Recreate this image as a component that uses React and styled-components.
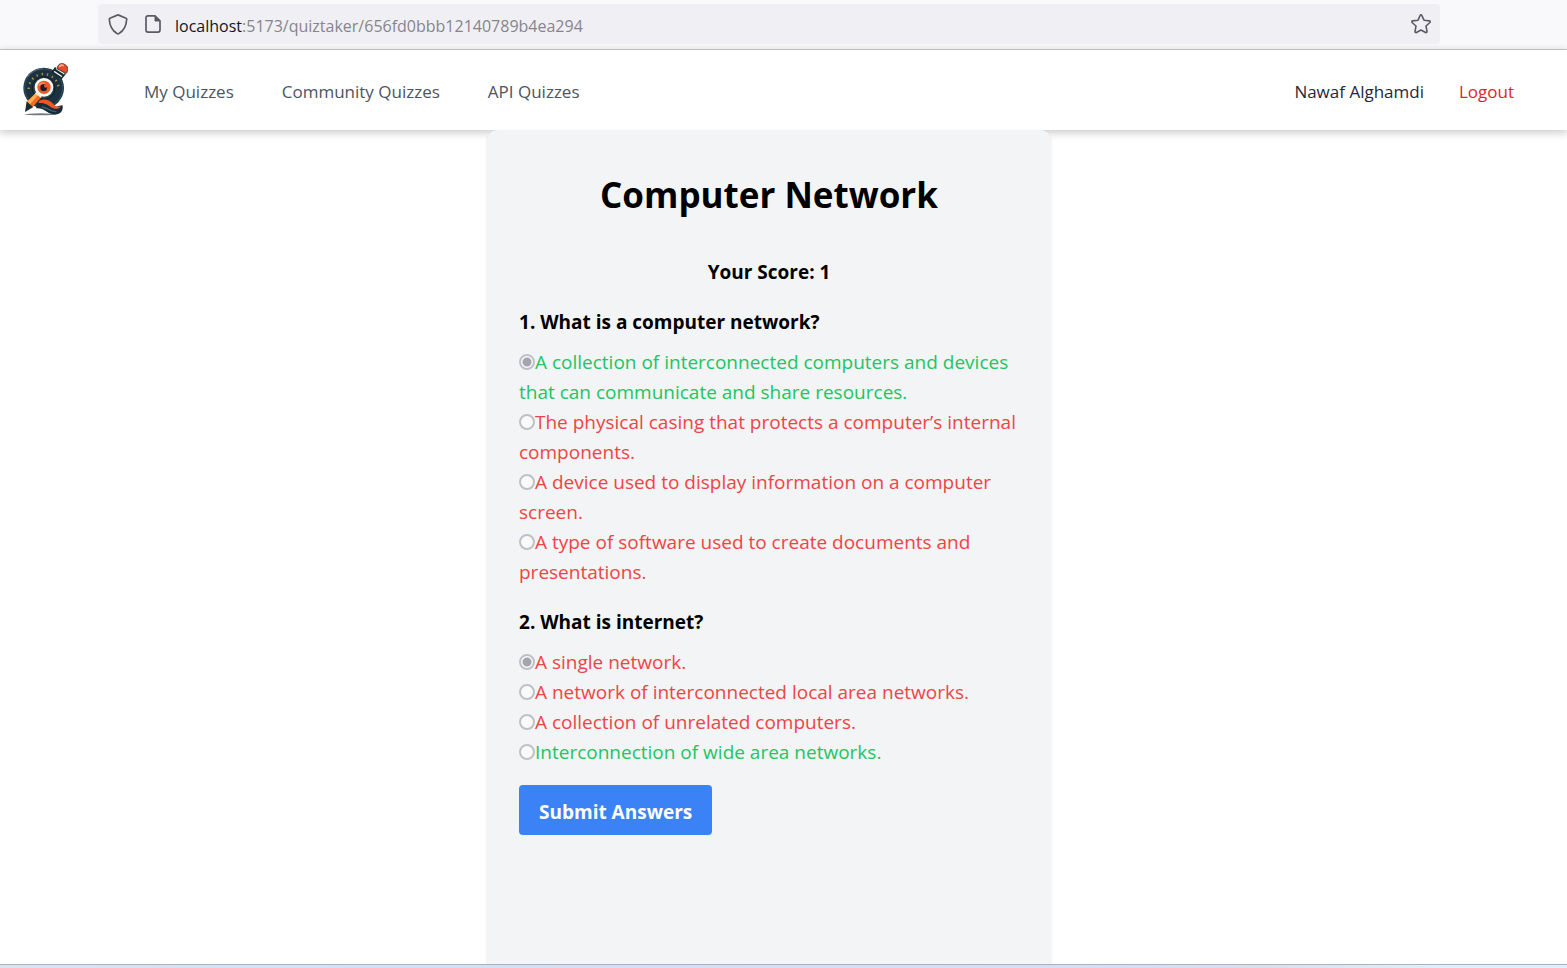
import React from "react";
import styled, { createGlobalStyle } from "styled-components";

const GlobalStyle = createGlobalStyle`
  *, *::before, *::after { box-sizing: border-box; }
  body {
    margin: 0;
    background: #fff;
    color: #000;
    font-family: "Open Sans", "Noto Sans", sans-serif;
  }
`;

const Page = styled.div`
  min-height: 100vh;
  display: flex;
  flex-direction: column;
`;

const BrowserBar = styled.div`
  display: flex;
  height: 50px;
  padding: 4px 127px 5px 98px;
  background: #f9f9fb;
  border-bottom: 1px solid #cccccc;
`;

const AddressBox = styled.div`
  flex: 1;
  display: flex;
  align-items: center;
  gap: 13px;
  padding: 0 8px;
  background: #f0f0f4;
  border-radius: 4px;
  color: #5b5b66;
  svg { display: block; flex: none; }
`;

const Address = styled.div`
  flex: 1;
  padding-top: 3px;
  font-size: 16px;
  line-height: 24px;
  color: #85858c;
`;

const Host = styled.span`
  color: #15141a;
`;

const StarButton = styled.button`
  padding: 0;
  border: 0;
  background: none;
  color: inherit;
`;

const Header = styled.header`
  display: flex;
  align-items: center;
  height: 80px;
  padding: 0 53px 0 22px;
  background: #fff;
  box-shadow: 0 2px 8px 1px rgba(0, 0, 0, 0.2);
  font-size: 17px;
  line-height: 28px;
`;

const LogoLink = styled.a`
  display: block;
  margin-right: 76px;
  svg { display: block; }
`;

const Nav = styled.nav`
  flex: 1;
  display: flex;
  gap: 48px;
  padding-top: 4px;
`;

const NavLink = styled.a`
  color: #4b5563;
  text-decoration: none;
`;

const Account = styled.div`
  display: flex;
  gap: 35px;
  padding-top: 4px;
  color: #1f2937;
`;

const LogoutButton = styled.button`
  padding: 0;
  border: 0;
  background: none;
  font: inherit;
  color: #dc2626;
`;

const Main = styled.main`
  flex: 1;
  display: flex;
  justify-content: center;
  padding-right: 29px;
`;

const Card = styled.form`
  position: relative;
  width: 100%;
  max-width: 564px;
  padding: 42px 32px 32px;
  background: #f3f4f6;
  border-radius: 10px 10px 0 0;
  box-shadow: 0 1px 3px rgba(0, 0, 0, 0.1);
  font-size: 19px;
  line-height: 30px;
`;

const Title = styled.h1`
  margin: 0 0 40px;
  font-size: 35px;
  line-height: 45px;
  font-weight: 700;
  text-align: center;
`;

const Score = styled.p`
  margin: 0 0 20px;
  font-weight: 700;
  text-align: center;
`;

const Question = styled.fieldset`
  margin: 0 0 20px;
  padding: 0;
  border: 0;
  min-width: 0;
  &:last-of-type { margin-bottom: 18px; }
`;

const Prompt = styled.legend`
  margin: 0 0 10px;
  padding: 0;
  font-weight: 700;
`;

const Option = styled.label`
  display: block;
  color: ${({ $correct }) => ($correct ? "#22c55e" : "#ef4444")};
`;

const Radio = styled.input`
  appearance: none;
  width: 16px;
  height: 16px;
  margin: 0;
  vertical-align: -1px;
  border: 2px solid #c0c0c8;
  border-radius: 50%;
  background: #fafafb;
  &:checked {
    background: radial-gradient(circle, #a5a5af 0 4px, #fafafb 5px);
  }
`;

const SubmitButton = styled.button`
  display: block;
  height: 50px;
  padding: 4px 20px 0;
  border: 0;
  border-radius: 4px;
  background: #3b82f6;
  color: #fff;
  font: inherit;
  font-weight: 700;
`;

const Taskbar = styled.footer`
  position: relative;
  height: 4px;
  border-top: 1px solid #a9b2c3;
  background: linear-gradient(90deg, #dbe3f3, #d3e0f6 24%, #d6def7 68%, #d9deef 80%, #e2effb 92%, #e2eefa);
`;

const ShieldIcon = () => (
  <svg width="24" height="24" viewBox="0 0 24 24" fill="none" stroke="currentColor" strokeWidth="1.7" strokeLinejoin="round" aria-hidden="true">
    <path d="M12 2.9 20.1 6.2c.5.2.7.6.6 1.1-.3 5.600-2.700 11.300-7.700 14.300-.6.4-1.400.4-2 0C6 18.600 3.600 12.900 3.300 7.300c0-.5.2-.9.6-1.100Z" />
  </svg>
);

const PageIcon = () => (
  <svg width="19" height="20" viewBox="0 0 19 20" aria-hidden="true">
    <path d="M5 1.900H12l5 5v9.200a2 2 0 0 1-2 2H5a2 2 0 0 1-2-2V3.900a2 2 0 0 1 2-2Z" fill="none" stroke="currentColor" strokeWidth="1.700" strokeLinejoin="round" />
    <path d="M12 2v5h5Z" fill="currentColor" stroke="currentColor" strokeLinejoin="round" />
  </svg>
);

const StarIcon = () => (
  <svg width="22" height="22" viewBox="0 0 22 22" fill="none" stroke="currentColor" strokeWidth="1.600" strokeLinejoin="round" aria-hidden="true">
    <path d="M10.200 2.400c.3-.7 1.300-.7 1.600 0l2.200 4.800 5.400.7c.8.1 1.100 1 .5 1.600L16 13l1 5.500c.1.800-.7 1.400-1.400 1L11 17l-4.600 2.500c-.7.4-1.500-.2-1.400-1L6 13 2.100 9.500c-.6-.6-.3-1.500.5-1.600L8 7.200Z" />
  </svg>
);

const Logo = () => (
  <svg width="46" height="54" viewBox="66 38 138 162" role="img" aria-label="Quiz home">
    <ellipse cx="122" cy="192" rx="48" ry="3" fill="#6f7980" />
    <circle cx="131" cy="113" r="61" fill="#1b3340" />
    <circle cx="131" cy="113" r="57" fill="none" stroke="#41616d" strokeWidth="2" />
    <circle cx="131" cy="113" r="34" fill="#263f4b" stroke="#0c1d28" strokeWidth="3" />
    <path d="M86 116a45 45 0 0 1 90 0" fill="none" stroke="#c28b40" strokeWidth="7" strokeDasharray="4 12" />
    <path d="M80 82a59 59 0 0 1 48-27" fill="none" stroke="#52737d" strokeWidth="3" />
    <path d="m154 65 11-15 33 20-13 17Z" fill="#102631" />
    <path d="m168 54 25 17M162 63l24 16" stroke="#e9e5dd" strokeWidth="4" />
    <path d="M171 55c2-13 11-18 21-14 13 5 14 18 7 28Z" fill="#e84b20" stroke="#15232b" strokeWidth="2" />
    <path d="M178 49c4-5 9-5 13-3" stroke="#ffb29a" strokeWidth="5" fill="none" />
    <path d="M115 154c20-13 33-2 42 10 9 10 17 2 31 1 2 20-8 29-28 27-22-3-25-20-52-18Z" fill="#142d39" />
    <path d="M118 151c15-7 29-3 39 7 9 10 15 15 27 9-7 11-22 11-33 2-12-9-20-11-36-11Z" fill="#ee5627" />
    <path d="M126 170c18 2 25 15 43 14" stroke="#45616c" strokeWidth="4" fill="none" />
    <circle cx="132" cy="111" r="24" fill="#ef562b" stroke="#fff9f0" strokeWidth="8" />
    <circle cx="131" cy="112" r="10" fill="#171f25" />
    <path d="M117 107c2-8 10-10 17-8" fill="none" stroke="#ff9b69" strokeWidth="4" />
    <circle cx="137" cy="107" r="5" fill="#ef562b" />
    <path d="m108 127 17 13-29 32-16-17Z" fill="#f36b22" />
    <path d="m108 127 7 6-27 31-9-7Z" fill="#ffb052" />
    <path d="m80 153 19 18-24 14Z" fill="#172b35" />
    <path d="m107 127 17 13" stroke="#fff3e7" strokeWidth="5" />
  </svg>
);

const questions = [
  {
    prompt: "What is a computer network?",
    chosen: 0,
    correct: 0,
    options: [
      "A collection of interconnected computers and devices that can communicate and share resources.",
      "The physical casing that protects a computer’s internal components.",
      "A device used to display information on a computer screen.",
      "A type of software used to create documents and presentations.",
    ],
  },
  {
    prompt: "What is internet?",
    chosen: 0,
    correct: 3,
    options: [
      "A single network.",
      "A network of interconnected local area networks.",
      "A collection of unrelated computers.",
      "Interconnection of wide area networks.",
    ],
  },
];

export default function App() {
  return (
    <Page>
      <GlobalStyle />
      <BrowserBar>
        <AddressBox>
          <ShieldIcon />
          <PageIcon />
          <Address>
            <Host>localhost</Host>:5173/quiztaker/656fd0bbb12140789b4ea294
          </Address>
          <StarButton type="button" aria-label="Bookmark this page">
            <StarIcon />
          </StarButton>
        </AddressBox>
      </BrowserBar>
      <Header>
        <LogoLink href="#home">
          <Logo />
        </LogoLink>
        <Nav>
          <NavLink href="#my">My Quizzes</NavLink>
          <NavLink href="#community">Community Quizzes</NavLink>
          <NavLink href="#api">API Quizzes</NavLink>
        </Nav>
        <Account>
          <span>Nawaf Alghamdi</span>
          <LogoutButton type="button">Logout</LogoutButton>
        </Account>
      </Header>
      <Main>
        <Card onSubmit={(event) => event.preventDefault()}>
          <Title>Computer Network</Title>
          <Score>Your Score: 1</Score>
          {questions.map((question, number) => (
            <Question key={question.prompt}>
              <Prompt>
                {number + 1}. {question.prompt}
              </Prompt>
              {question.options.map((option, index) => (
                <Option key={option} $correct={index === question.correct}>
                  <Radio
                    type="radio"
                    name={`question-${number}`}
                    defaultChecked={index === question.chosen}
                    disabled
                  />
                  {option}
                </Option>
              ))}
            </Question>
          ))}
          <SubmitButton type="submit">Submit Answers</SubmitButton>
        </Card>
      </Main>
      <Taskbar />
    </Page>
  );
}
